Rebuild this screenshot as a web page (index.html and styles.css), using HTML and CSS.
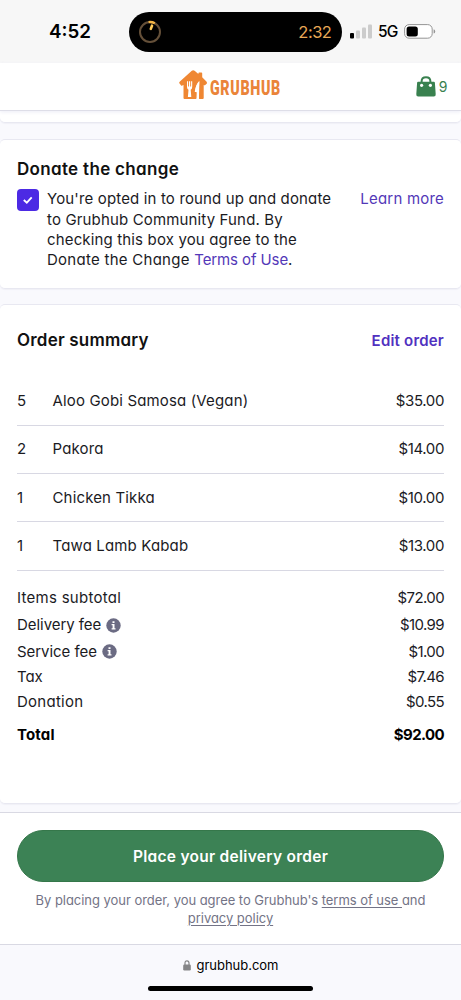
FILE: index.html
```html
<!DOCTYPE html>
<html lang="en">
<head>
<meta charset="utf-8">
<meta name="viewport" content="width=device-width">
<title>Grubhub checkout</title>
<link rel="stylesheet" href="styles.css">
</head>
<body>
<div class="phone">
  <div class="status">
    <span class="clock">4:52</span>
    <div class="island">
      <svg class="timer" width="24" height="24" viewBox="0 0 24 24" fill="none">
        <circle cx="12" cy="12" r="10" stroke="#655039" stroke-width="2"/>
        <path d="M10.6 2.1A10 10 0 0 1 16.8 3.2" stroke="#f5b545" stroke-width="2.4"/>
        <path d="M12.8 8.9L14 5.7" stroke="#ffca58" stroke-width="2.6" stroke-linecap="round"/>
      </svg>
      <span class="countdown">2:32</span>
    </div>
    <svg class="signal" width="23" height="15" viewBox="0 0 23 15">
      <rect x="0" y="9" width="4" height="5.5" rx="1" fill="#000"/>
      <rect x="6" y="6.5" width="4" height="8" rx="1" fill="#ccc"/>
      <rect x="12" y="3.5" width="4" height="11" rx="1" fill="#ccc"/>
      <rect x="18" y="0.5" width="4" height="14" rx="1" fill="#ccc"/>
    </svg>
    <span class="network">5G</span>
    <svg class="battery" width="32" height="15" viewBox="0 0 32 15">
      <rect x="0.6" y="0.6" width="27.6" height="13.6" rx="4.5" fill="#fff" stroke="#949494"/>
      <rect x="2.6" y="2.5" width="11.2" height="10" rx="2.5" fill="#000"/>
      <path d="M29.6 5.2Q31.2 5.7 31.2 7.4T29.6 9.6Z" fill="#949494"/>
    </svg>
  </div>

  <header class="header">
    <div class="logo">
      <svg width="28" height="32" viewBox="0 0 28 32">
        <path fill="#ef8733" d="M.6 14.6Q-.4 13.6.9 12.4L12.8 1.8Q14.2.7 15.6 1.8L19.4 5V4.2Q19.4 3.4 20.2 3.4H22.4Q23.2 3.4 23.2 4.2V8.3L27.4 12.6Q28.6 14 27.4 15L26.2 16.1Q25.6 16.6 24.7 16V29Q24.7 30 23.7 30H20.5Q19.5 30 19.6 29L20.2 13Q17 15 16 23H17.7V29Q17.7 30 16.7 30H5.5Q4.5 30 4.5 29V16L3.3 16.6Q2.5 17 1.9 16.2Z"/>
        <path fill="#fff" d="M8 12.2H9.1V17.4H10V12.2H11.2V17.4H12.1V12.2H13.2V18Q13.2 20.2 11.7 20.7L12.3 28H8.9L9.5 20.7Q8 20.2 8 18ZM20.4 11.7Q16.6 15.6 15.7 22.8L18 23.3 17.7 30H19.9Z"/>
      </svg>
      <span class="wordmark">GRUBHUB</span>
    </div>
    <div class="cart">
      <svg width="20" height="21" viewBox="0 0 20 21">
        <path d="M5.6 8V5.5Q5.6 1.2 10 1.2T14.4 5.5V8" fill="none" stroke="#39814f" stroke-width="2"/>
        <path d="M2.1 5.8H17.9Q18.8 5.8 18.9 6.7L19.7 18.3Q19.9 20.5 17.8 20.5H2.2Q.1 20.5.3 18.3L1.1 6.7Q1.2 5.8 2.1 5.8Z" fill="#39814f"/>
        <circle cx="5.6" cy="9.3" r="1.6" fill="#fff"/><circle cx="14.4" cy="9.3" r="1.6" fill="#fff"/>
      </svg>
      <span>9</span>
    </div>
  </header>

  <main class="content">
    <section class="card card-previous"></section>
    <section class="card donate">
      <h2>Donate the change</h2>
      <div class="opt">
        <span class="checkbox">
          <svg width="22" height="22" viewBox="0 0 22 22"><path d="M6.8 11L9.8 13.7 14.7 8.3" fill="none" stroke="#fff" stroke-width="1.8"/></svg>
        </span>
        <p>You're opted in to round up and donate<br>to Grubhub Community Fund. By<br>checking this box you agree to the<br><span class="wide">Donate the Change </span><a class="terms">Terms of Use</a>.</p>
        <a class="learn">Learn more</a>
      </div>
    </section>

    <section class="card summary">
      <div class="summary-head"><h2>Order summary</h2><a>Edit order</a></div>
      <ul class="items">
        <li><span class="qty">5</span><span class="name">Aloo Gobi Samosa (Vegan)</span><span class="price">$35.00</span></li>
        <li><span class="qty">2</span><span class="name">Pakora</span><span class="price">$14.00</span></li>
        <li><span class="qty">1</span><span class="name">Chicken Tikka</span><span class="price">$10.00</span></li>
        <li><span class="qty">1</span><span class="name">Tawa Lamb Kabab</span><span class="price">$13.00</span></li>
      </ul>
      <div class="totals">
        <div class="line fee"><span class="wide">Items subtotal</span><span class="price">$72.00</span></div>
        <div class="line fee"><span class="tight">Delivery fee</span><svg class="info" width="15" height="15" viewBox="0 0 15 15"><circle cx="7.5" cy="7.5" r="7.2" fill="#6b6b83"/><path d="M6.5 3.2H8.5V5H6.5ZM5.6 6H8.5V10.2H9.5V11.6H5.6V10.2H6.6V7.3H5.6Z" fill="#fff"/></svg><span class="price">$10.99</span></div>
        <div class="line fee"><span class="tight">Service fee</span><svg class="info" width="15" height="15" viewBox="0 0 15 15"><circle cx="7.5" cy="7.5" r="7.2" fill="#6b6b83"/><path d="M6.5 3.2H8.5V5H6.5ZM5.6 6H8.5V10.2H9.5V11.6H5.6V10.2H6.6V7.3H5.6Z" fill="#fff"/></svg><span class="price">$1.00</span></div>
        <div class="line"><span class="tight">Tax</span><span class="price">$7.46</span></div>
        <div class="line"><span class="wide">Donation</span><span class="price">$0.55</span></div>
        <div class="line total"><span>Total</span><span class="price">$92.00</span></div>
      </div>
    </section>
  </main>

  <footer class="checkout">
    <button class="place">Place your delivery order</button>
    <p class="legal">By placing your order, you agree to Grubhub's <u>terms of use </u>and<br><u>privacy policy</u></p>
  </footer>

  <div class="browser">
    <div class="address">
      <svg width="8" height="11" viewBox="0 0 8 11"><path d="M2 5V3Q2 .8 4 .8T6 3V5" fill="none" stroke="#858587" stroke-width="1.2"/><rect x="0.2" y="4.5" width="7.6" height="6" rx="1.2" fill="#858587"/></svg>
      <span>grubhub.com</span>
    </div>
    <div class="home"></div>
  </div>
</div>
</body>
</html>
```
FILE: styles.css
```css
* { box-sizing: border-box; }
body { margin: 0; background: #f9f9fd; }
.phone {
  width: 461px; height: 1000px; display: flex; flex-direction: column; overflow: hidden;
  font: 375 15px/20.3px Inter, sans-serif; font-feature-settings: "cv11"; letter-spacing: .15px;
  color: #1b1b1f;
}
h2, p, ul { margin: 0; padding: 0; }
a { color: #5338b8; }
.wide { letter-spacing: .27px; }
.tight { letter-spacing: -.05px; }

.status { height: 63px; background: #f7f7f7; display: flex; align-items: center; flex: none; color: #000; letter-spacing: 0; }
.clock { width: 129.4px; padding: 2px 0 0 49px; font-size: 18.8px; font-weight: 600; font-feature-settings: normal; }
.island {
  width: 213px; height: 40px; margin-top: 1px; border-radius: 20px; background: #000;
  display: flex; align-items: center; justify-content: space-between; padding: 0 11px 0 8.5px;
}
.countdown { color: #e9a957; font-size: 16.5px; letter-spacing: -.5px; font-weight: 400; }
.signal { margin-left: 7.6px; }
.network { margin: 2px 0 0 5px; font-size: 15.5px; font-weight: 500; width: 26px; letter-spacing: -.8px; }

.header {
  height: 48px; background: #fff; border-bottom: 1px solid #dedee8; box-shadow: 0 1px 4px #ececf6;
  display: flex; justify-content: space-between; align-items: flex-start; padding-left: 179px; flex: none; z-index: 1;
}
.logo { display: flex; align-items: flex-start; gap: 3px; margin-top: 6px; }
.wordmark {
  font: 900 19.5px/24px Roboto, sans-serif; letter-spacing: .9px; color: #ea8439;
  margin-top: 8px; width: 74px; transform: scaleX(.73); transform-origin: left; white-space: nowrap;
}
.cart { display: flex; align-items: center; gap: 3px; padding: 13px 14px 0 0; color: #39814f; font-size: 14px; line-height: 21px; letter-spacing: -.4px; }

.content { height: 701px; flex: none; overflow: hidden; }
.card { background: #fff; border: solid #e8e8f1; border-width: 1px 0; border-radius: 5px; box-shadow: 0 1px 1px #f0f0f7; }
.card-previous { height: 12px; border-top: 0; border-radius: 0 0 5px 5px; }
h2 { font-size: 17px; line-height: 22px; font-weight: 600; color: #111; letter-spacing: .2px; }
.donate { height: 150px; margin-top: 16px; padding: 18px 17px 0; }
.donate h2 { letter-spacing: .32px; }
.opt { display: flex; align-items: flex-start; }
.checkbox { width: 22px; height: 22px; margin-top: 9px; background: #4c2ae4; border-radius: 4px; }
.opt p { margin: 9.4px 0 0 8px; flex: 1; white-space: nowrap; }
.terms { letter-spacing: -.1px; }
.learn { margin-top: 9px; letter-spacing: .2px; }

.summary { height: 500px; margin-top: 15px; padding: 23px 17px 0; }
.summary-head { display: flex; justify-content: space-between; align-items: center; }
.summary-head a { font-weight: 600; color: #5031c0; margin-top: 3px; letter-spacing: .2px; }
.items { list-style: none; margin-top: 26.5px; }
.items li { display: flex; align-items: center; height: 48.2px; border-bottom: 1px solid #d8d8e3; }
.qty { width: 35.5px; }
.price { margin-left: auto; letter-spacing: -.38px; }
.totals { margin-top: 14.5px; }
.totals .price { letter-spacing: -.6px; }
.line { display: flex; align-items: center; height: 24.5px; }
.fee { height: 26.7px; }
.info { margin-left: 5px; }
.line.total { margin-top: 8.5px; font-weight: 700; color: #000; }

.checkout { height: 133px; flex: none; background: #fff; border: solid #d9d9e3; border-width: 1px 0; padding: 17px 17px 0; }
.place { display: block; width: 427px; height: 52px; border: 1px solid #35774a; border-radius: 26px; background: #3c8255; color: #fff; font: 600 15.5px Inter, sans-serif; font-feature-settings: "cv11"; letter-spacing: .28px; }
.legal { margin-top: 9px; text-align: center; font-size: 13px; line-height: 18px; color: #737386; letter-spacing: -.04px; }
.legal u { text-underline-offset: 2px; }

.browser { flex: 1; background: #f9f9fd; display: flex; flex-direction: column; align-items: center; }
.address { display: flex; align-items: center; gap: 6px; margin-top: 10px; font-size: 13px; font-weight: 400; color: #000; font-feature-settings: normal; letter-spacing: -.03px; }
.home { width: 165px; height: 5px; margin-top: 11px; border-radius: 3px; background: #000; }
```
